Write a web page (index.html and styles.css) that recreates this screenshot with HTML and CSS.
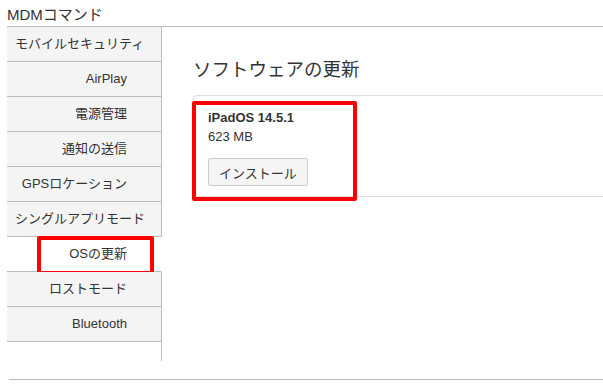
FILE: index.html
```html
<!DOCTYPE html>
<html lang="ja">
<head>
  <meta charset="UTF-8">
  <meta name="viewport" content="width=device-width, initial-scale=1.0">
  <title>MDMコマンド</title>
  <link rel="stylesheet" href="styles.css">
</head>
<body>
  <div class="page">
    <div class="page-title">MDMコマンド</div>

    <div class="layout">
      <ul class="side-nav">
        <li class="nav-item">モバイルセキュリティ</li>
        <li class="nav-item">AirPlay</li>
        <li class="nav-item">電源管理</li>
        <li class="nav-item">通知の送信</li>
        <li class="nav-item">GPSロケーション</li>
        <li class="nav-item">シングルアプリモード</li>
        <li class="nav-item active">OSの更新<span class="mark mark-nav"></span></li>
        <li class="nav-item">ロストモード</li>
        <li class="nav-item">Bluetooth</li>
        <li class="nav-fill"></li>
      </ul>

      <div class="content">
        <h2>ソフトウェアの更新</h2>
        <div class="update-panel">
          <div class="os-name">iPadOS 14.5.1</div>
          <div class="os-size">623 MB</div>
          <button class="install-btn">インストール</button>
          <span class="mark mark-panel"></span>
        </div>
      </div>
    </div>

    <div class="footer-line"></div>
  </div>
</body>
</html>
```

FILE: styles.css
```css
/* MDM command page */
body {
  margin: 0;
  padding: 0;
  background: #ffffff;
  color: #333333;
  font-family: "Liberation Sans", "Noto Sans CJK JP", sans-serif;
  overflow: hidden;
}

.page {
  padding-left: 7px;
}

.page-title {
  box-sizing: border-box;
  height: 27px;
  padding-top: 5px;
  font-size: 15px;
  line-height: 20px;
  border-bottom: 1px solid #bcbcbc;
}

.layout {
  display: flex;
}

.side-nav {
  list-style: none;
  margin: 0;
  padding: 0;
  width: 155px;
  flex-shrink: 0;
}

.nav-item {
  position: relative;
  height: 34px;
  line-height: 34px;
  padding: 0 34px 0 8px;
  font-size: 13px;
  text-align: right;
  white-space: nowrap;
  background: #f4f4f4;
  border-right: 1px solid #bcbcbc;
  border-bottom: 1px solid #bcbcbc;
}

.nav-item.active {
  background: #ffffff;
  border-right-color: transparent;
}

.nav-fill {
  height: 19px;
  border-right: 1px solid #bcbcbc;
}

.content {
  flex: 1;
  padding-left: 31px;
}

.content h2 {
  margin: 29px 0 11px;
  font-size: 18.5px;
  font-weight: normal;
  line-height: 28px;
}

.update-panel {
  position: relative;
  margin-right: -4px;
  padding: 12px 14px 10px;
  border: 1px solid #dddddd;
  border-radius: 4px;
  font-size: 13px;
  line-height: 19px;
}

.os-name {
  font-weight: bold;
}

.install-btn {
  display: block;
  margin-top: 12px;
  height: 28px;
  padding: 0 10px;
  font-family: inherit;
  font-size: 13px;
  color: #333333;
  background: #f5f5f5;
  border: 1px solid #cccccc;
  border-radius: 2px;
}

/* red annotation boxes */
.mark {
  position: absolute;
  box-sizing: border-box;
  border: 4px solid #ff0000;
  border-radius: 2px;
  pointer-events: none;
}

.mark-nav {
  top: -1px;
  left: 30px;
  width: 117px;
  height: 39px;
}

.mark-panel {
  top: 5px;
  left: -2px;
  width: 165px;
  height: 100px;
}

.footer-line {
  margin: 18px 0 0 2px;
  border-top: 1px solid #bcbcbc;
}
```
